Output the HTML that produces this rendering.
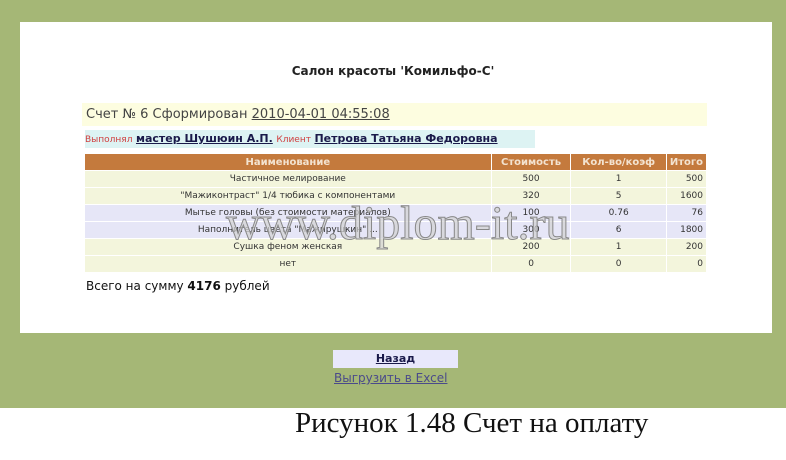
<!DOCTYPE html><html><head><meta charset="utf-8"><style>
body{margin:0;width:786px;height:460px;background:#fff;position:relative;overflow:hidden;font-family:"DejaVu Sans","Liberation Sans",sans-serif}
.g{position:absolute;left:0;top:0;width:786px;height:408px;background:#a5b776}
.p{position:absolute;left:20px;top:22px;width:752px;height:311px;background:#fff}
.a{position:absolute}
table{position:absolute;left:85px;top:153px;width:622px;border-collapse:separate;border-spacing:0 1px;font-size:9px;color:#333}
td,th{padding:0 3px;height:16px;border-right:1px solid #fff}
th{background:#c47a3d;color:#f3e3d0;font-weight:bold;font-size:10px}
tr.y td{background:#f3f5dc}tr.l td{background:#e6e6f7}
td.n{text-align:center}td.r{text-align:right}td.c{text-align:center}
</style></head><body>
<div class="g"></div><div class="p"></div>
<div class="a" style="left:0;width:786px;top:64px;text-align:center;font-size:12px;font-weight:bold;color:#222">Салон красоты 'Комильфо-С'</div>
<div class="a" style="left:82px;top:103px;width:625px;height:23px;background:#fdfde0;font-size:13px;color:#444;line-height:24px;padding-left:4px;box-sizing:border-box">Счет № 6 Сформирован <u>2010-04-01 04:55:08</u></div>
<div class="a" style="left:85px;top:130px;width:450px;height:18px;background:#ddf3f3;font-size:11px;line-height:18px;white-space:nowrap"><span style="color:#d04040;font-size:9px">Выполнял</span> <b style="color:#1a1a4a"><u>мастер Шушюин А.П.</u></b> <span style="color:#d04040;font-size:9px">Клиент</span> <b style="color:#1a1a4a"><u>Петрова Татьяна Федоровна</u></b></div>
<table>
<tr><th style="width:402px">Наименование</th><th style="width:73px">Стоимость</th><th style="width:89px">Кол-во/коэф</th><th>Итого</th></tr>
<tr class="y"><td class="n">Частичное мелирование</td><td class="c">500</td><td class="c">1</td><td class="r">500</td></tr>
<tr class="y"><td class="n">"Мажиконтраст" 1/4 тюбика с компонентами</td><td class="c">320</td><td class="c">5</td><td class="r">1600</td></tr>
<tr class="l"><td class="n">Мытье головы (без стоимости материалов)</td><td class="c">100</td><td class="c">0.76</td><td class="r">76</td></tr>
<tr class="l"><td class="n" style="white-space:nowrap">Наполнитель цвета "Мажирушкин" ...</td><td class="c">300</td><td class="c">6</td><td class="r">1800</td></tr>
<tr class="y"><td class="n">Сушка феном женская</td><td class="c">200</td><td class="c">1</td><td class="r">200</td></tr>
<tr class="y"><td class="n">нет</td><td class="c">0</td><td class="c">0</td><td class="r">0</td></tr>
</table>
<div class="a" style="left:226px;top:196px;font-family:'Liberation Serif',serif;font-size:48px;color:rgba(210,210,210,.7);-webkit-text-stroke:1px #888">www.diplom-it.ru</div>
<div class="a" style="left:86px;top:279px;font-size:12px;color:#111">Всего на сумму <b>4176</b> рублей</div>
<div class="a" style="left:333px;top:350px;width:125px;height:18px;background:#e8e8fb;text-align:center;font-size:11px;font-weight:bold;line-height:18px;color:#1a1a4a"><u>Назад</u></div>
<div class="a" style="left:334px;top:371px;font-size:12px;color:#4a4a8a"><u>Выгрузить в Excel</u></div>
<div class="a" style="left:295px;top:407px;font-family:'Liberation Serif',serif;font-size:29px;color:#111">Рисунок 1.48 Счет на оплату</div>
</body></html>
